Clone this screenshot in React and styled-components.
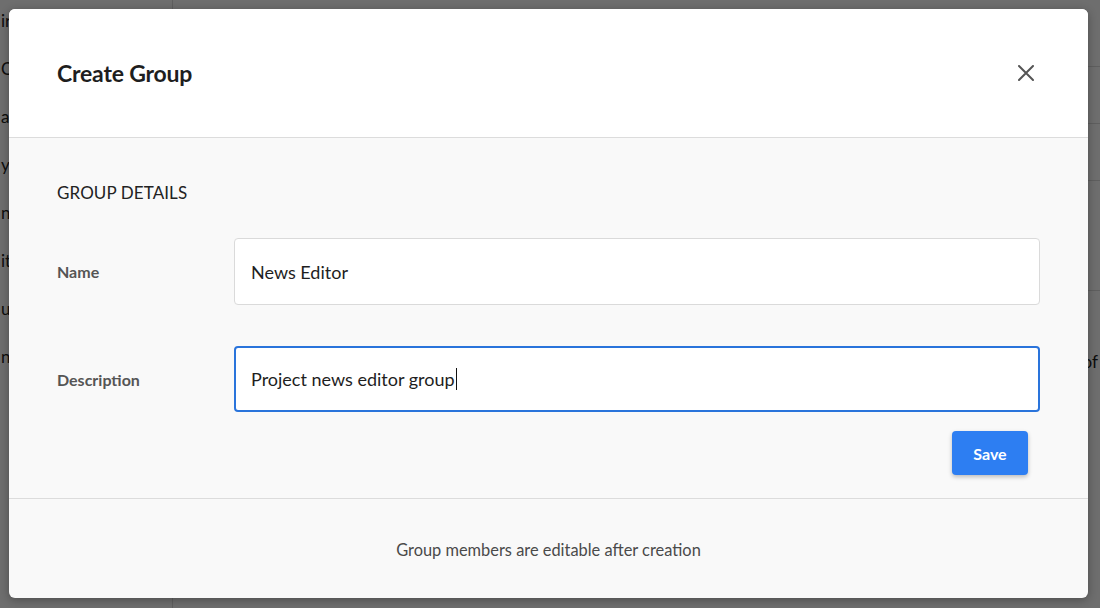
import React from 'react';
import styled, { createGlobalStyle } from 'styled-components';

const Global = createGlobalStyle`
  html, body {
    margin: 0;
    padding: 0;
    height: 100%;
  }
  body {
    font-family: Lato, "Liberation Sans", sans-serif;
    color: #222;
    overflow: hidden;
  }
`;

const Page = styled.div`
  position: relative;
  width: 1100px;
  height: 608px;
  display: flex;
  background: #fff;
`;

const Sidebar = styled.div`
  width: 172px;
  border-right: 1px solid #ddd;
  display: flex;
  flex-direction: column;
  padding-top: 10px;
  gap: 26px;
`;

const SideItem = styled.div`
  font-size: 17px;
  height: 22px;
  padding-left: 1px;
  white-space: nowrap;
`;

const Main = styled.div`
  flex: 1;
  display: flex;
  flex-direction: column;
  padding-top: 66px;
`;

const Row = styled.div`
  height: ${p => p.h}px;
  border-top: 1px solid #ddd;
  display: flex;
  align-items: center;
  justify-content: flex-end;
  font-size: 17px;
  padding-right: 2px;
`;

const Overlay = styled.div`
  position: absolute;
  inset: 0;
  background: rgba(0, 0, 0, 0.57);
  padding: 9px 12px 10px 9px;
  display: flex;
`;

const Modal = styled.div`
  flex: 1;
  display: flex;
  flex-direction: column;
  background: #f9f9f9;
  border-radius: 6px;
  overflow: hidden;
  box-shadow: 0 2px 10px rgba(0, 0, 0, 0.3);
`;

const Header = styled.div`
  height: 129px;
  background: #fff;
  border-bottom: 1px solid #dcdcdc;
  display: flex;
  align-items: center;
  justify-content: space-between;
  padding: 0 54px 0 48px;
  box-sizing: border-box;
`;

const Title = styled.h2`
  margin: 0;
  font-size: 23px;
  font-weight: 700;
  color: #1e1e1e;
  letter-spacing: -0.2px;
`;

const Close = styled.button`
  border: 0;
  background: none;
  padding: 0;
  width: 16px;
  height: 16px;
  display: flex;
  align-items: center;
  justify-content: center;
  cursor: pointer;
`;

const Body = styled.div`
  padding: 44px 48px 23px 48px;
  border-bottom: 1px solid #dcdcdc;
  display: flex;
  flex-direction: column;
`;

const SectionTitle = styled.div`
  font-size: 17px;
  color: #222;
  letter-spacing: 0.1px;
  margin-bottom: 35px;
`;

const Field = styled.div`
  display: grid;
  grid-template-columns: 177px 1fr;
  align-items: center;
  margin-bottom: ${p => p.gap}px;
`;

const Label = styled.label`
  font-size: 16px;
  font-weight: 700;
  color: #555;
`;

const Input = styled.div`
  height: ${p => p.h}px;
  box-sizing: border-box;
  background: #fff;
  border: ${p => (p.focused ? '2px solid #2a74db' : '1px solid #dadada')};
  border-radius: 4px;
  padding-left: ${p => (p.focused ? 15 : 16)}px;
  display: flex;
  align-items: center;
  font-size: 18px;
  color: #1e1e1e;
`;

const Caret = styled.span`
  display: inline-block;
  width: 1px;
  height: 22px;
  background: #111;
  margin-left: 1px;
`;

const Actions = styled.div`
  display: flex;
  justify-content: flex-end;
  padding-right: 12px;
`;

const SaveButton = styled.button`
  width: 76px;
  height: 44px;
  border: 0;
  border-radius: 4px;
  background: #2d7ef2;
  color: #fff;
  font-family: inherit;
  font-size: 16px;
  font-weight: 700;
  box-shadow: 0 2px 4px rgba(0, 0, 0, 0.25);
  cursor: pointer;
`;

const Footer = styled.div`
  flex: 1;
  display: flex;
  align-items: center;
  justify-content: center;
  font-size: 16.4px;
  color: #4a4a4a;
  padding-top: 2px;
`;

const sideItems = ['irst', 'Cost', 'alt', 'ype', 'nav', 'itm', 'user', 'news'];

export default function App() {
  return (
    <Page>
      <Global />
      <Sidebar>
        {sideItems.map((t, i) => (
          <SideItem key={i}>{t}</SideItem>
        ))}
      </Sidebar>
      <Main>
        <Row h={56} />
        <Row h={56} />
        <Row h={109} />
        <Row h={140}>of</Row>
      </Main>

      <Overlay>
        <Modal>
          <Header>
            <Title>Create Group</Title>
            <Close aria-label="Close">
              <svg width="16" height="16" viewBox="0 0 16 16">
                <path d="M1 1 L15 15 M15 1 L1 15" stroke="#555" strokeWidth="2" strokeLinecap="round" />
              </svg>
            </Close>
          </Header>
          <Body>
            <SectionTitle>GROUP DETAILS</SectionTitle>
            <Field gap={41}>
              <Label>Name</Label>
              <Input h={67}>News Editor</Input>
            </Field>
            <Field gap={19}>
              <Label>Description</Label>
              <Input h={66} focused>
                Project news editor group
                <Caret />
              </Input>
            </Field>
            <Actions>
              <SaveButton>Save</SaveButton>
            </Actions>
          </Body>
          <Footer>Group members are editable after creation</Footer>
        </Modal>
      </Overlay>
    </Page>
  );
}
